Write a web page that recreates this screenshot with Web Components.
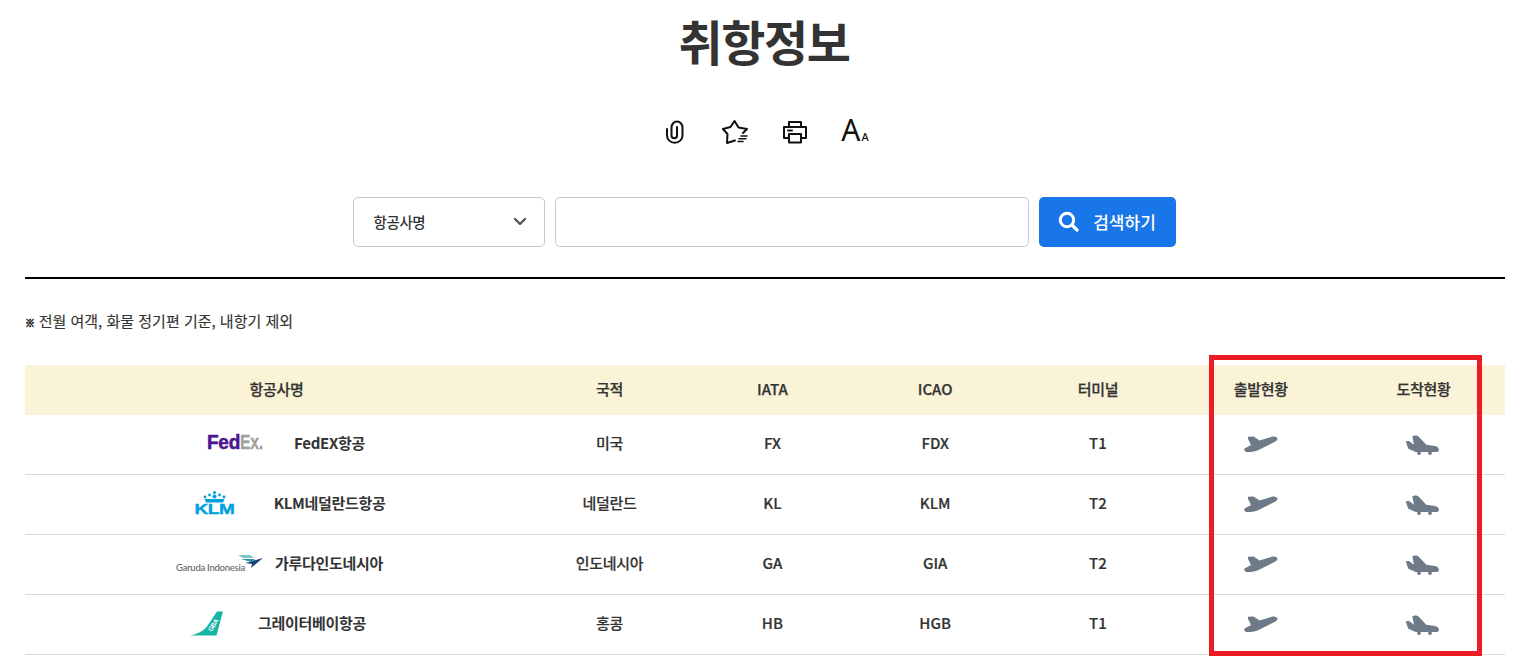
<!DOCTYPE html>
<html lang="ko">
<head>
<meta charset="utf-8">
<title>취항정보</title>
<style>
html, body { margin: 0; padding: 0; background: #fff; overflow: hidden; }
body {
    height: 665px;
    color: #333;
    font-family: "Noto Sans CJK KR", "Noto Sans", sans-serif;
}
main { width: 1480px; margin-left: 25px; }
</style>
</head>
<body>
<main>
    <page-title>취항정보</page-title>
    <tool-bar></tool-bar>
    <search-bar label="항공사명" button="검색하기"></search-bar>
    <page-note><b>※</b> 전월 여객, 화물 정기편 기준, 내항기 제외</page-note>
    <flight-table>
        <flight-row name="FedEX항공" logo="fedex" country="미국" iata="FX" icao="FDX" terminal="T1"></flight-row>
        <flight-row name="KLM네덜란드항공" logo="klm" country="네덜란드" iata="KL" icao="KLM" terminal="T2"></flight-row>
        <flight-row name="가루다인도네시아" logo="garuda" country="인도네시아" iata="GA" icao="GIA" terminal="T2"></flight-row>
        <flight-row name="그레이터베이항공" logo="gba" country="홍콩" iata="HB" icao="HGB" terminal="T1"></flight-row>
    </flight-table>
</main>

<script>
class PageTitle extends HTMLElement {
    constructor() {
        super();
        this.attachShadow({ mode: 'open' });
        this.shadowRoot.innerHTML = `
            <style>
                :host { display: block; height: 84px; padding-right: 2px; text-align: center; }
                h1 {
                    margin: 0;
                    font-size: 48px;
                    line-height: 80px;
                    font-weight: 700;
                    letter-spacing: -1.4px;
                    color: #333;
                }
            </style>
            <h1><slot></slot></h1>
        `;
    }
}

class ToolBar extends HTMLElement {
    constructor() {
        super();
        this.attachShadow({ mode: 'open' });
        this.shadowRoot.innerHTML = `
            <style>
                :host {
                    display: flex;
                    justify-content: center;
                    align-items: center;
                    height: 56px;
                    margin-top: 20px;
                }
                .tool {
                    width: 60px;
                    height: 56px;
                    display: flex;
                    align-items: center;
                    justify-content: center;
                }
                svg { display: block; fill: none; stroke: #111; stroke-width: 2; stroke-linecap: round; stroke-linejoin: round; }
                .font-size {
                    font-family: "Noto Sans", sans-serif;
                    color: #111;
                    line-height: 30px;
                    padding-top: 3px;
                    white-space: nowrap;
                }
                .font-size b { font-weight: 400; font-size: 30px; }
                .font-size i { font-style: normal; font-weight: 500; font-size: 11px; margin-left: 1px; }
            </style>
            <div class="tool">
                <svg width="18" height="24" viewBox="0 0 18 24">
                    <path d="M1 9v6.500a7.750 7.250 0 0 0 15.500 0V7.500a5.500 6 0 0 0-11 0v8a2.750 2.750 0 0 0 5.500 0V7"/>
                </svg>
            </div>
            <div class="tool">
                <svg width="26" height="24" viewBox="0 0 26 24">
                    <path d="M21 13l4-4-8.500-1.500L12.500 1 8.500 7 .9 9l4.600 5L5 23l8-2.500"/>
                    <path d="M19 16h6M17 18.800h7M16 21.600h5" stroke-width="1.500"/>
                </svg>
            </div>
            <div class="tool">
                <svg width="24" height="24" viewBox="0 0 24 24">
                    <path d="M6 6.500V2h12v4.500"/>
                    <path d="M6 18H1V7h22v11h-5"/>
                    <path d="M6 14h12v8.500H6z"/>
                    <path d="M5 10.500h4"/>
                </svg>
            </div>
            <div class="tool"><span class="font-size"><b>A</b><i>A</i></span></div>
        `;
    }
}

class SearchBar extends HTMLElement {
    constructor() {
        super();
        this.attachShadow({ mode: 'open' });
        this.shadowRoot.innerHTML = `
            <style>
                :host {
                    display: flex;
                    justify-content: center;
                    gap: 10px;
                    height: 50px;
                    margin-top: 37px;
                    padding: 0 2px 30px 0;
                    border-bottom: 2px solid #000;
                }
                .field {
                    box-sizing: border-box;
                    height: 50px;
                    border: 1px solid #c8c8c8;
                    border-radius: 5px;
                    background: #fff;
                }
                .select {
                    width: 192px;
                    display: flex;
                    align-items: center;
                    justify-content: space-between;
                    padding: 0 17px 2px 20px;
                    font-size: 14.500px;
                    font-weight: 500;
                    letter-spacing: -0.4px;
                    color: #333;
                }
                .select svg { display: block; }
                .input { width: 474px; }
                button {
                    box-sizing: border-box;
                    width: 137px;
                    height: 50px;
                    border: 0;
                    border-radius: 5px;
                    background: #1976e8;
                    color: #fff;
                    font: 500 17px "Noto Sans CJK KR", sans-serif;
                    display: flex;
                    align-items: center;
                    justify-content: center;
                    gap: 14px;
                    padding: 0 0 2px;
                }
                button svg { display: block; }
            </style>
            <div class="field select">
                <span>${this.getAttribute('label')}</span>
                <svg width="14" height="9" viewBox="0 0 14 9"><path d="M2 2l5 5 5-5" fill="none" stroke="#555" stroke-width="2.400" stroke-linecap="round" stroke-linejoin="round"/></svg>
            </div>
            <div class="field input"></div>
            <button type="button">
                <svg width="21" height="21" viewBox="0 0 21 21"><circle cx="9" cy="9" r="6.700" fill="none" stroke="#fff" stroke-width="3"/><path d="M14 14l5 5" stroke="#fff" stroke-width="3.200" stroke-linecap="round"/></svg>
                <span>${this.getAttribute('button')}</span>
            </button>
        `;
    }
}

class PageNote extends HTMLElement {
    constructor() {
        super();
        this.attachShadow({ mode: 'open' });
        this.shadowRoot.innerHTML = `
            <style>
                :host {
                    display: block;
                    margin-top: 29px;
                    height: 26px;
                    line-height: 26px;
                    font-size: 15px;
                    letter-spacing: 0;
                    color: #333;
                    -webkit-text-stroke: 0.15px #333;
                }
                ::slotted(b) {
                    font-size: 10px;
                    font-weight: 700;
                    letter-spacing: -0.5px;
                    color: #222;
                    -webkit-text-stroke: 0.6px #222;
                }
            </style>
            <slot></slot>
        `;
    }
}

class FlightTable extends HTMLElement {
    constructor() {
        super();
        this.attachShadow({ mode: 'open' });
        this.shadowRoot.innerHTML = `
            <style>
                :host { display: block; position: relative; margin-top: 31px; }
                .head {
                    display: grid;
                    grid-template-columns: 34% repeat(6, 11%);
                    height: 50px;
                    align-items: center;
                    background: #faf3d7;
                    text-align: center;
                    font-size: 15px;
                    font-weight: 500;
                    letter-spacing: -0.3px;
                    color: #333;
                    -webkit-text-stroke: 0.25px #333;
                }
                .head span { margin-bottom: 4px; }
                .head .code { letter-spacing: 0; }
                .highlight {
                    position: absolute;
                    left: 1184px;
                    top: -10px;
                    width: 273px;
                    height: 301px;
                    box-sizing: border-box;
                    border: 5px solid #ed1c24;
                    pointer-events: none;
                }
            </style>
            <div class="head">
                <span>항공사명</span><span>국적</span><span class="code">IATA</span><span class="code">ICAO</span><span>터미널</span><span>출발현황</span><span>도착현황</span>
            </div>
            <slot></slot>
            <div class="highlight"></div>
        `;
    }
}

const LOGOS = {
    fedex: { box: 95, gap: 11, svg: `
        <svg width="95" height="24" viewBox="0 0 95 24">
            <text x="19" y="18" font-family="Liberation Sans, sans-serif" font-weight="700" font-size="20" textLength="33" lengthAdjust="spacingAndGlyphs" fill="#4d148c" stroke="#4d148c" stroke-width=".5">Fed</text>
            <text x="52" y="18" font-family="Liberation Sans, sans-serif" font-weight="700" font-size="20" textLength="23" lengthAdjust="spacingAndGlyphs" fill="#a0a0a0" stroke="#a0a0a0" stroke-width=".3">Ex.</text>
        </svg>` },
    klm: { box: 95, gap: 11, svg: `
        <svg width="95" height="30" viewBox="1.500 -3 95 30" fill="#00a1de">
            <circle cx="48" cy="1.500" r="1.600"/><circle cx="43" cy="4" r="1.400"/><circle cx="53" cy="4" r="1.400"/>
            <circle cx="48" cy="5.500" r="2"/><circle cx="38.500" cy="6" r="1.400"/><circle cx="57.500" cy="6" r="1.400"/>
            <path d="M38 8h20l-1.500 3.500h-17z"/>
            <text x="28" y="23" font-family="Liberation Sans, sans-serif" font-weight="700" font-size="15" textLength="40" lengthAdjust="spacingAndGlyphs" stroke="#00a1de" stroke-width=".4">KLM</text>
        </svg>` },
    garuda: { box: 95, gap: 10, svg: `
        <svg width="95" height="24" viewBox="0 0 95 24">
            <text x="6" y="20" font-family="Lato, sans-serif" font-size="10" textLength="69" lengthAdjust="spacingAndGlyphs" fill="#666">Garuda Indonesia</text>
            <path d="M68 4h12l4 3H73z" fill="#7cc4c8"/>
            <path d="M71 8h13l2 2-5 1z" fill="#2f8ea0"/>
            <path d="M75 12l9-2 2-1 7-2-6 5-6 5 1-4z" fill="#1c3f7a"/>
        </svg>` },
    gba: { box: 40, gap: 31, svg: `
        <svg width="40" height="26" viewBox="1 0 40 26">
            <path d="M4 25.500c6-1 13-4 17-9L31 1.500h6L30.500 25.500z" fill="#14b5a5"/>
            <text x="0" y="0" transform="translate(25.500 22) rotate(-58)" font-family="Liberation Sans, sans-serif" font-weight="700" font-size="6.500" fill="#fff">GBA</text>
        </svg>` }
};

class FlightRow extends HTMLElement {
    constructor() {
        super();
        this.attachShadow({ mode: 'open' });
        const logo = LOGOS[this.getAttribute('logo')];
        this.shadowRoot.innerHTML = `
            <style>
                :host {
                    display: grid;
                    grid-template-columns: 34% repeat(6, 11%);
                    height: 60px;
                    box-sizing: border-box;
                    align-items: center;
                    border-bottom: 1px solid #d9d9d9;
                    text-align: center;
                    font-size: 15px;
                    font-weight: 500;
                    letter-spacing: -0.3px;
                    color: #333;
                }
                .airline, .cell { margin-bottom: 4px; }
                .cell { -webkit-text-stroke: 0.2px #333; }
                .code { letter-spacing: 0; }
                .airline { display: flex; justify-content: center; align-items: center; }
                .logo { display: block; width: ${logo.box}px; margin-right: ${logo.gap}px; }
                .logo svg { display: block; }
                .status { display: flex; justify-content: center; }
                .status svg { display: block; fill: #6e7a88; }
                .arrival svg { margin-right: 3px; }
            </style>
            <div class="airline"><span class="logo">${logo.svg}</span><strong>${this.getAttribute('name')}</strong></div>
            <span class="cell">${this.getAttribute('country')}</span>
            <span class="cell code">${this.getAttribute('iata')}</span>
            <span class="cell code">${this.getAttribute('icao')}</span>
            <span class="cell code">${this.getAttribute('terminal')}</span>
            <span class="status">
                <svg width="34" height="18" viewBox="0 0 34 18"><path d="M4 .8L9.500.6l6 3.900 13-3.900c2.500-.6 5 .6 5 2.200s-1.500 2.500-4 3.600L13.500 14.500C9 16 5 16.300 2.500 16 .5 15.700-.2 13.500.5 12.500L7 9 4 3z"/></svg>
            </span>
            <span class="status arrival">
                <svg width="34" height="20" viewBox="0 0 34 20"><path d="M.7 6.300L4 6l5 3.700-1.700-8.400L10.700.3l2.600 1 8 8.400 8.700 1.300c2.500.5 4 2.500 4 3.700 0 1.500-1.500 2.300-3.300 2.300H10.700L3.300 13.700z"/><circle cx="14" cy="18" r="1.900"/><circle cx="25" cy="18" r="1.900"/></svg>
            </span>
        `;
    }
}

customElements.define('page-title', PageTitle);
customElements.define('tool-bar', ToolBar);
customElements.define('search-bar', SearchBar);
customElements.define('page-note', PageNote);
customElements.define('flight-table', FlightTable);
customElements.define('flight-row', FlightRow);
</script>
</body>
</html>
